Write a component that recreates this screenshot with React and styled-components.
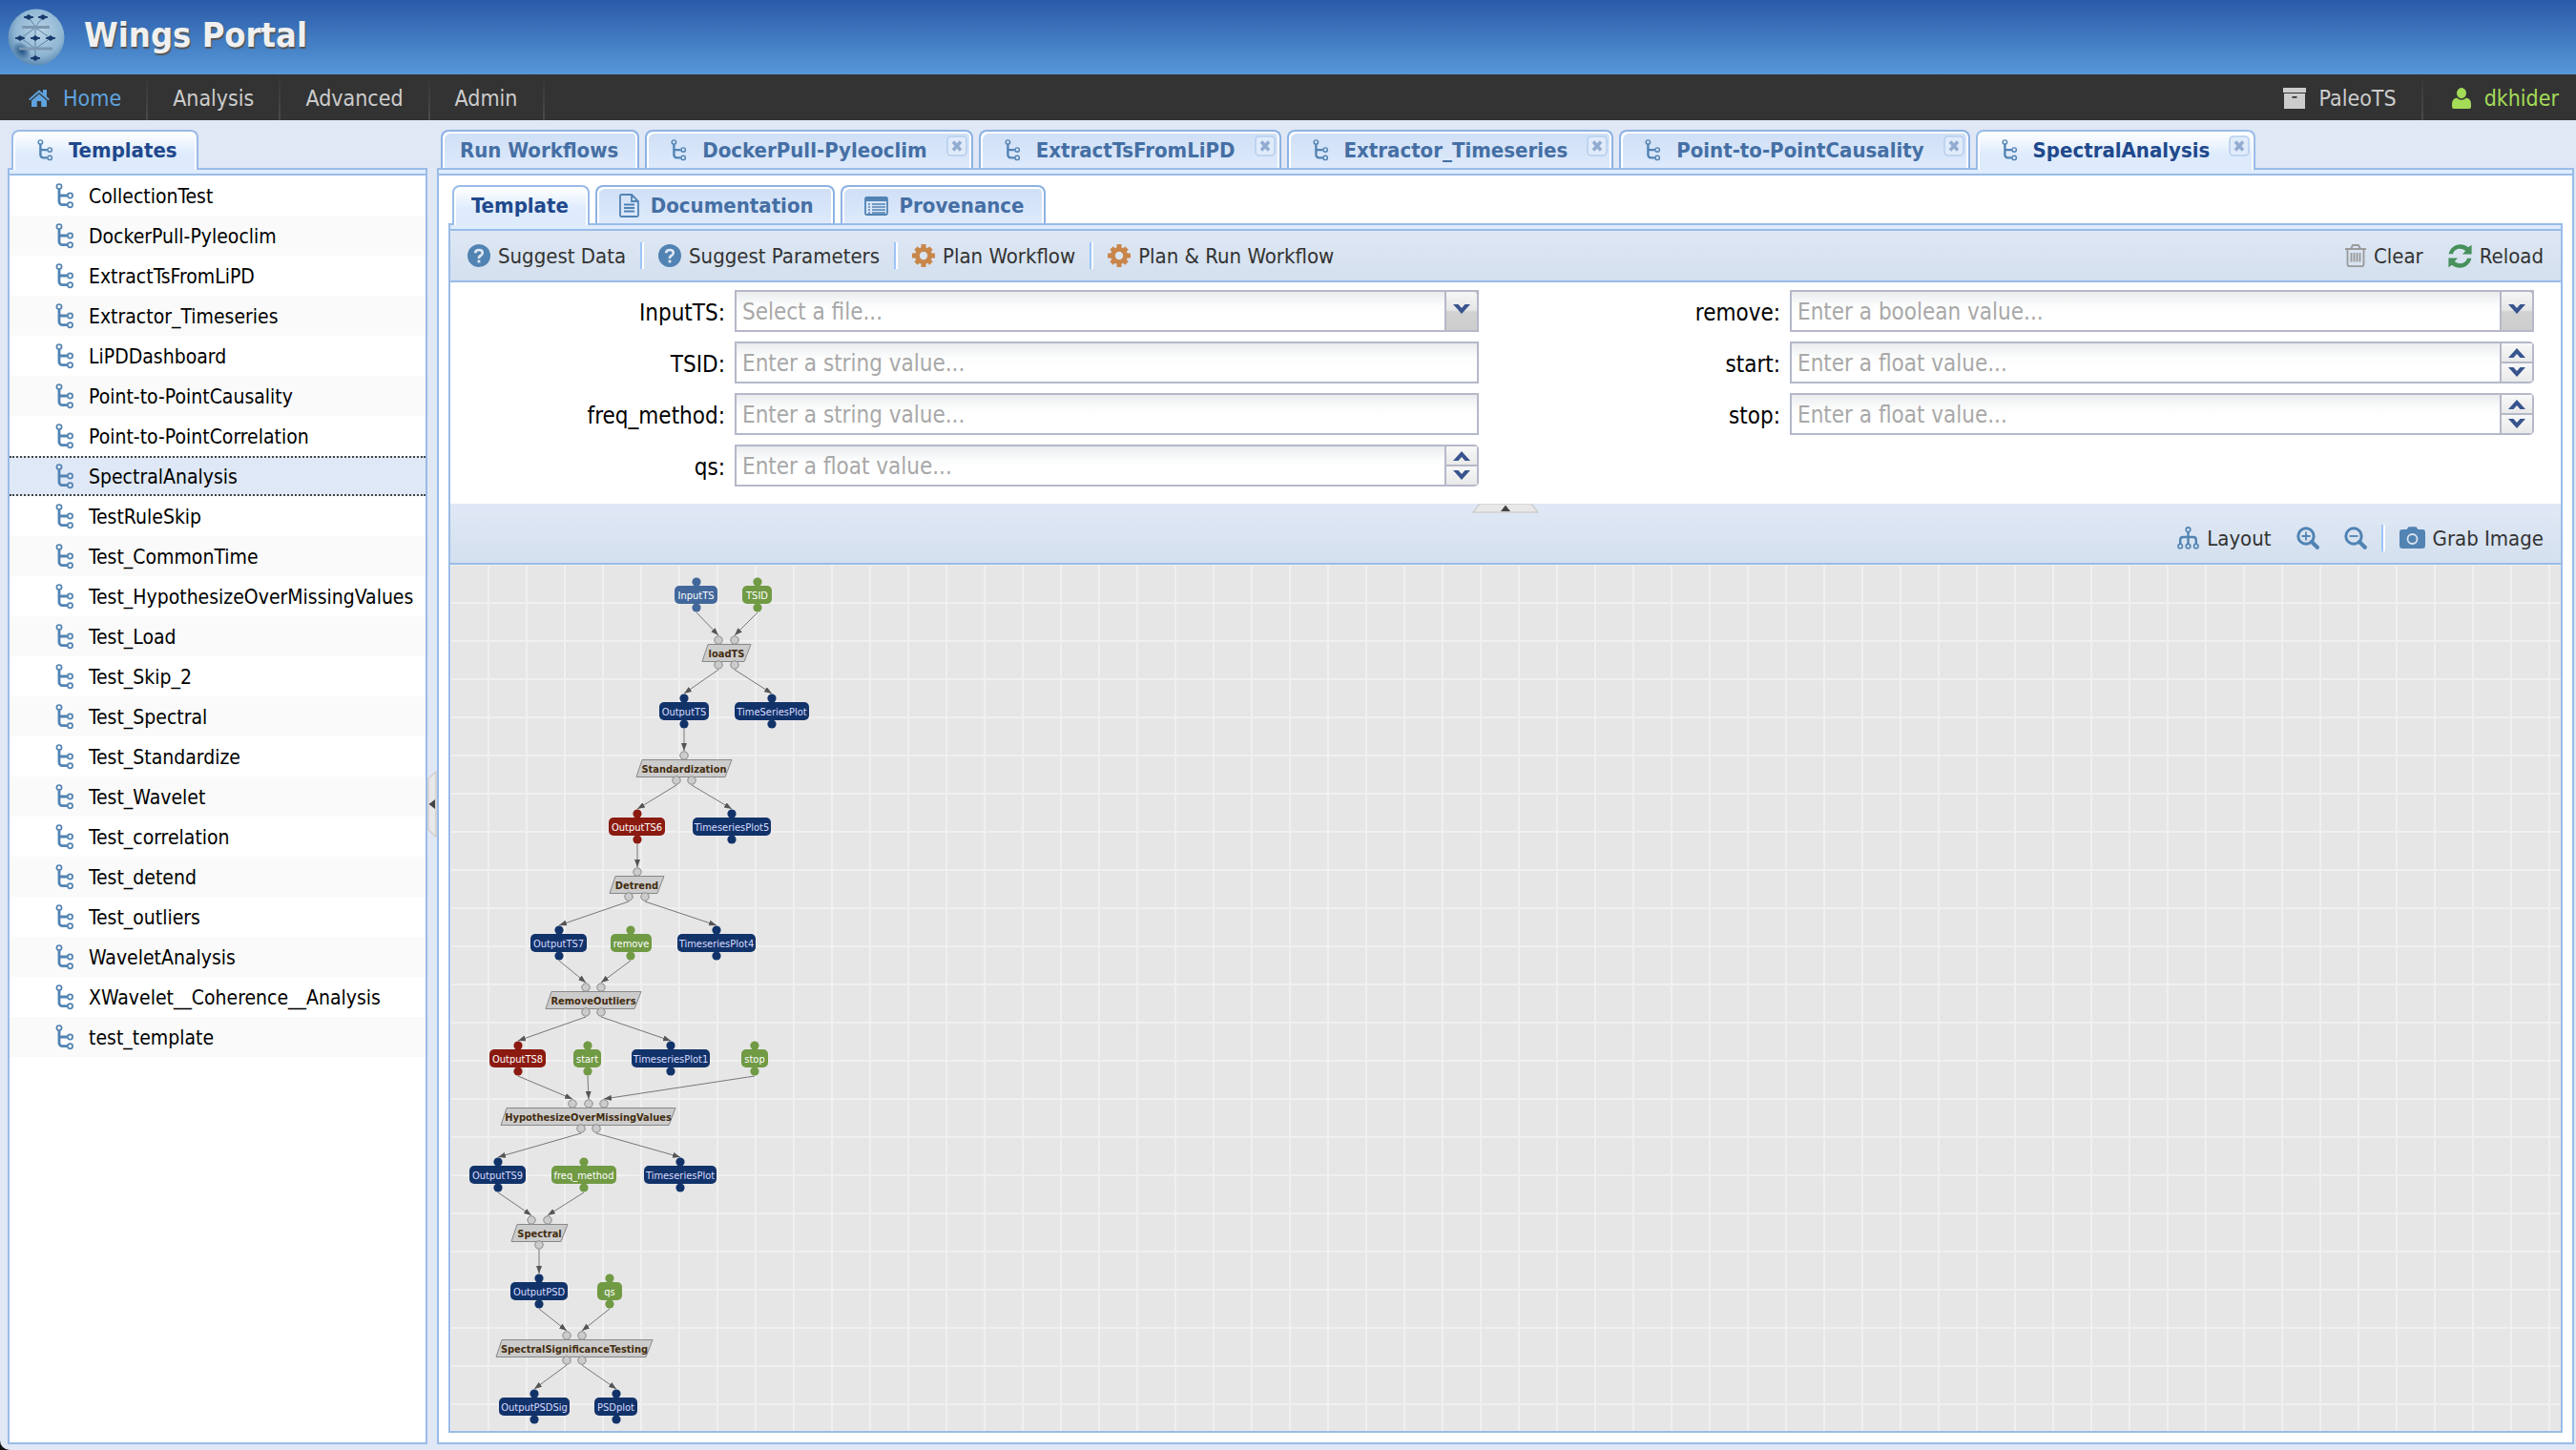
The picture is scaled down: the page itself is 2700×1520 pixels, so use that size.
import React from "react";
import styled, { createGlobalStyle, css } from "styled-components";

const FONT = '"DejaVu Sans Condensed", "DejaVu Sans", "Noto Sans", sans-serif';
const BLUE = "#5183b3";
const LINE = "#99bce8";

const GlobalStyle = createGlobalStyle`
  *, *::before, *::after { box-sizing: border-box; }
  html, body { margin: 0; background: #111; }
  body, button, input, select { font-family: ${FONT}; }
  button { border: 0; padding: 0; margin: 0; background: none; color: inherit; font-size: inherit; font-weight: inherit; cursor: pointer; }
  ul { list-style: none; margin: 0; padding: 0; }
  a { color: inherit; text-decoration: none; }
  svg { display: block; flex: none; }
`;

/* ---------- shell ---------- */
const Shell = styled.div`
  height: 100vh;
  display: flex;
  flex-direction: column;
  background: #e0e7f5;
  border-bottom-left-radius: 10px;
  overflow: hidden;
`;
const Header = styled.header`
  display: flex;
  align-items: center;
  gap: 20px;
  height: 78px;
  padding: 0 8px;
  background: linear-gradient(#2a5aa8, #5698d8);
`;
const Brand = styled.h1`
  margin: 0;
  padding-bottom: 4px;
  font-size: 36px;
  line-height: 44px;
  color: #f0f0f0;
  text-shadow: 1px 2px 1px #555;
`;
const Nav = styled.nav`
  display: flex;
  justify-content: space-between;
  height: 48px;
  background: #333;
`;
const NavGroup = styled.div`
  display: flex;
`;
const NavLink = styled.a`
  display: flex;
  align-items: center;
  gap: 14px;
  padding-top: 2px;
  padding-left: ${(p) => (p.$wide ? 30 : 26)}px;
  padding-right: ${(p) => (p.$last ? 18 : 26)}px;
  font-size: 23px;
  color: ${(p) => p.$color || "#ccc"};
  border-right: ${(p) => (p.$last ? 0 : 2)}px solid;
  border-image: linear-gradient(#333, #4c4c4c) 1;
`;
const Workspace = styled.div`
  flex: 1;
  min-height: 0;
  display: flex;
  padding: 10px 2px 6px 8px;
`;

/* ---------- tabs ---------- */
const TabbedPanel = styled.section`
  display: flex;
  flex-direction: column;
  min-width: 0;
  min-height: 0;
  ${(p) => (p.$width ? css`width: ${p.$width}px; flex: none;` : css`flex: 1;`)}
`;
const TabBar = styled.div`
  display: flex;
  gap: 6px;
  height: 40px;
  padding-left: 4px;
`;
const TabBox = styled.div`
  position: relative;
  display: flex;
  height: ${(p) => (p.$active ? 42 : 40)}px;
  border: 2px solid ${(p) => (p.$active ? LINE : "#8db2e3")};
  border-bottom: 0;
  border-radius: 8px 8px 0 0;
  box-shadow: inset 2px 2px 0 #fff, inset -2px 0 0 #fff;
  color: ${(p) => (p.$active ? "#20488c" : "#456fa4")};
  background: ${(p) => (p.$active ? "linear-gradient(#fff, #deebfd 60%)" : "linear-gradient(#cfdff5, #deeafc)")};
`;
const TabButton = styled.button`
  display: flex;
  align-items: center;
  gap: ${(p) => (p.$compact ? 12 : 16)}px;
  height: 38px;
  padding-top: 1px;
  padding-left: ${(p) => (p.$icon ? (p.$compact ? 23 : 25) : 18)}px;
  padding-right: 20px;
  font-size: 22px;
  font-weight: bold;
  white-space: nowrap;
`;
const CloseButton = styled.button`
  width: 22px;
  height: 22px;
  margin: 4px 4px 0 0;
`;
const PanelBand = styled.div`
  height: 8px;
  background: #deecfd;
  border: 2px solid ${LINE};
`;
const PanelBody = styled.div`
  flex: 1;
  min-height: 0;
  display: flex;
  flex-direction: column;
  padding: ${(p) => (p.$pad ? 10 : 0)}px;
  background: #fff;
  border: 2px solid ${LINE};
  border-top: 0;
`;

/* ---------- templates list ---------- */
const Row = styled.li`
  height: 42px;
  background: ${(p) => (p.$odd ? "#fafafa" : "#fff")};
  ${(p) =>
    p.$selected &&
    css`
      background: #dfe8f6;
      border: 2px dotted #444;
      border-width: 2px 0;
    `}
`;
const RowButton = styled.button`
  display: flex;
  align-items: center;
  gap: 15px;
  width: 100%;
  height: 100%;
  padding-top: 1px;
  padding-left: 48px;
  font-size: 21px;
  color: #000;
  white-space: nowrap;
`;

/* ---------- splitters ---------- */
const Splitter = styled.div`
  flex: none;
  display: flex;
  align-items: center;
  justify-content: center;
  ${(p) => (p.$vertical ? css`width: 10px; padding-top: 36px;` : css`height: 10px; background: #e0e7f5;`)}
`;

/* ---------- toolbars ---------- */
const Toolbar = styled.div`
  flex: none;
  display: flex;
  align-items: center;
  height: 54px;
  padding: 0 18px;
  border-bottom: 2px solid ${LINE};
  background: linear-gradient(#dfe7f4, #d3e0ee);
`;
const Tool = styled.button`
  display: flex;
  align-items: center;
  gap: 8px;
  font-size: 22px;
  color: #333;
  white-space: nowrap;
  & + & { margin-left: 26px; }
`;
const Divider = styled.span`
  width: 4px;
  height: 28px;
  margin: 0 15px;
  border-left: 2px solid #9cc5fb;
  border-right: 2px solid #fff;
`;
const Spacer = styled.span`
  flex: 1;
`;

/* ---------- form ---------- */
const Form = styled.form`
  flex: none;
  display: grid;
  grid-template-columns: 1fr 1fr;
  padding: 8px 0 18px;
`;
const FormColumn = styled.div`
  display: flex;
  flex-direction: column;
  gap: 10px;
`;
const Field = styled.div`
  display: flex;
  gap: 10px;
  padding-right: 28px;
`;
const Label = styled.label`
  width: 288px;
  padding-top: 2px;
  text-align: right;
  font-size: 24px;
  line-height: 44px;
  height: 44px;
  color: #000;
`;
const Control = styled.div`
  position: relative;
  flex: 1;
  display: flex;
  height: 44px;
`;
const inputStyle = css`
  flex: 1;
  min-width: 0;
  height: 44px;
  margin: 0;
  padding: 2px 6px 0;
  font-size: 24px;
  color: #a8a8a8;
  border: 2px solid #b5b8c8;
  border-radius: 0;
  background: linear-gradient(#e9ecee, #fbfcfc 14px, #fff 22px);
  outline: none;
  appearance: none;
`;
const TextInput = styled.input`
  ${inputStyle}
  &::placeholder { color: #a8a8a8; opacity: 1; }
`;
const Select = styled.select`
  ${inputStyle}
`;
const SelectTrigger = styled.span`
  position: absolute;
  right: 0;
  top: 0;
  width: 36px;
  height: 44px;
  display: flex;
  align-items: center;
  justify-content: center;
  padding-bottom: 4px;
  pointer-events: none;
  border: 2px solid #b5b8c8;
  border-top-right-radius: 5px;
  background: linear-gradient(#f6f6f6, #e6e6e6 48%, #d2d2d2 52%, #cdcdcd);
`;
const Spinner = styled.span`
  display: flex;
  flex-direction: column;
  width: 36px;
  margin-left: -2px;
  border: 2px solid #b5b8c8;
  border-radius: 0 5px 5px 0;
  background: #b5b8c8;
  gap: 2px;
`;
const SpinButton = styled.button`
  flex: 1;
  display: flex;
  align-items: center;
  justify-content: center;
  background: linear-gradient(#f8f8f8, #e9e9e9);
`;

/* ---------- canvas ---------- */
const Canvas = styled.div`
  flex: 1;
  min-height: 0;
  overflow: hidden;
  background-color: #e6e6e6;
  background-image:
    linear-gradient(90deg, #f0f0f0 1px, transparent 1px, transparent 39px, #f0f0f0 39px),
    linear-gradient(#f0f0f0 1px, transparent 1px, transparent 39px, #f0f0f0 39px);
  background-size: 40px 40px;
`;

/* ---------- icons ---------- */
const TreeIcon = ({ w = 20, h = 27 }) => (
  <svg width={w} height={h} viewBox="0 0 20 27" fill="none" stroke={BLUE}>
    <path d="M4 6.5V19a3.5 3.5 0 0 0 3.5 3.7H12.5M5 13H12.5" strokeWidth="2.8" />
    <g strokeWidth="1.7">
      <circle cx="4" cy="3.6" r="2.6" />
      <circle cx="15.5" cy="13" r="2.6" />
      <circle cx="15.5" cy="22.8" r="2.6" />
    </g>
  </svg>
);
const HomeIcon = () => (
  <svg width="22" height="20" viewBox="0 0 22 20" fill="#5fa3df">
    <path d="M11 1.2 0 11l1.4 1.3L11 4l9.600 8.300L22 11l-3-2.700V1h-4v3.700z" />
    <path d="M11 5.500 3 12.500V19h5.800v-6h4.400v6H19v-6.500z" />
  </svg>
);
const ArchiveIcon = () => (
  <svg width="24" height="22" viewBox="0 0 24 22" fill="#ccc">
    <path d="M0 0h24v5H0z" />
    <path d="M1 6h22v16H1zM9.500 9v1.800h5V9z" fillRule="evenodd" />
  </svg>
);
const UserIcon = () => (
  <svg width="20" height="22" viewBox="0 0 20 22" fill="#a4db57">
    <ellipse cx="10" cy="5.600" rx="5" ry="5.600" />
    <path d="M5 10.500Q10 15 15 10.500 20 11.500 20 17v3q0 2-2 2H2q-2 0-2-2v-3q0-5.500 5-6.500z" />
  </svg>
);
const DocIcon = () => (
  <svg width="21" height="25" viewBox="0 0 21 25" fill="none" stroke={BLUE} strokeWidth="1.800">
    <path d="M1 2.500Q1 1 2.500 1H13l7 7v14.500q0 1.500-1.500 1.500h-16Q1 24 1 22.500zM13 1v7h7M5 11.500h11M5 15h11M5 18.500h11" />
  </svg>
);
const ListIcon = () => (
  <svg width="25" height="20" viewBox="0 0 25 20" fill="none" stroke={BLUE}>
    <rect x="1" y="1" width="23" height="18" rx="1.500" strokeWidth="1.800" />
    <path d="M1 3h23" strokeWidth="4" />
    <path d="M8 8h14M8 11h14M8 14h14M8 17h14" strokeWidth="1.600" />
    <path d="M4 8h2M4 11h2M4 14h2M4 17h2" strokeWidth="1.600" />
  </svg>
);
const HelpIcon = () => (
  <svg width="24" height="24" viewBox="0 0 24 24">
    <circle cx="12" cy="12" r="12" fill={BLUE} />
    <path d="M8.200 9.300Q8.200 6 12 6t3.800 3.100Q15.800 11 13.800 12T12 15" fill="none" stroke="#dfe8f4" strokeWidth="2.600" />
    <rect x="10.600" y="16.600" width="2.800" height="2.800" fill="#dfe8f4" />
  </svg>
);
const GearIcon = () => (
  <svg width="24" height="24" viewBox="0 0 24 24">
    <g stroke="#c8864a" strokeWidth="5">
      <path d="M12 0v24M0 12h24M4 4l16 16M20 4 4 20" />
    </g>
    <circle cx="12" cy="12" r="9" fill="#c8864a" />
    <circle cx="12" cy="12" r="4.200" fill="#dbe5f1" />
  </svg>
);
const TrashIcon = () => (
  <svg width="22" height="24" viewBox="0 0 22 24" fill="none" stroke="#9a9a9a" strokeWidth="1.800">
    <path d="M0 5h22M6 5 8 1h6l2 4M2.500 5v16q0 2.200 2 2.200h13q2 0 2-2.200V5M6.500 9v9.500M9.500 9v9.500M12.500 9v9.500M15.500 9v9.500" />
  </svg>
);
const ReloadIcon = () => (
  <svg width="25" height="25" viewBox="0 0 25 25" fill="#46915c">
    <path d="M.6 10.200C2 4 7 .3 12.700.3c3.300 0 6 1 8.300 3L24.600.800V10.500H15l3.200-3.400C15.500 4.800 12 4.400 9.500 5.300 7 6.200 5.600 8 5 10.200z" />
    <path d="M24.400 14.800C23 21 18 24.700 12.300 24.700c-3.300 0-6-1-8.300-3L.4 24.200V14.500H10l-3.200 3.400c2.700 2.300 6.200 2.700 8.700 1.800 2.500-.9 3.900-2.700 4.500-4.900z" />
  </svg>
);
const LayoutIcon = () => (
  <svg width="23" height="24" viewBox="0 0 23 24" fill="none" stroke={BLUE}>
    <path d="M11.500 6v12.500M3.200 18.500V14q0-3 3-3h10.600q3 0 3 3v4.500" strokeWidth="2.400" />
    <g strokeWidth="1.600">
      <circle cx="11.500" cy="3.200" r="2.300" />
      <circle cx="3.200" cy="20.500" r="2.300" />
      <circle cx="11.500" cy="20.500" r="2.300" />
      <circle cx="19.800" cy="20.500" r="2.300" />
    </g>
  </svg>
);
const ZoomIcon = ({ plus }) => (
  <svg width="24" height="24" viewBox="0 0 24 24" fill="none" stroke={BLUE}>
    <circle cx="10" cy="10" r="8.200" strokeWidth="3" />
    <path d="M16 16l5.800 5.800" strokeWidth="4.200" strokeLinecap="round" />
    <path d={plus ? "M5.500 10h9M10 5.500v9" : "M5.500 10h9"} strokeWidth="1.800" />
  </svg>
);
const CameraIcon = () => (
  <svg width="27" height="24" viewBox="0 0 27 24">
    <path d="M3 3h4.500L9.500.3h8L19.500 3H24q3 0 3 3v14q0 3-3 3H3q-3 0-3-3V6q0-3 3-3z" fill={BLUE} />
    <circle cx="13.500" cy="13" r="5" fill="none" stroke="#dbe5f1" strokeWidth="1.800" />
  </svg>
);
const CloseIcon = () => (
  <svg width="22" height="22" viewBox="0 0 22 22">
    <rect x="1" y="1" width="20" height="20" rx="4" fill="#e0ebfa" stroke="#b7cfee" strokeWidth="1.600" />
    <path d="M7 6.500l8 9M15 6.500l-8 9" stroke="#92abd0" strokeWidth="3.400" />
  </svg>
);
const Chevron = ({ up }) => (
  <svg width="18" height="11" viewBox="0 0 18 11" fill="#38548e">
    <path d={up ? "M0 11 9 1l9 10h-5.500L9 7l-3.500 4z" : "M0 0 9 10 18 0h-5.500L9 4 5.500 0z"} />
  </svg>
);
const HandleUp = () => (
  <svg width="70" height="10" viewBox="0 0 70 10">
    <path d="M1 9 8 0h54l7 9z" fill="#e8e8e8" stroke="#cfcfcf" strokeWidth="1.500" />
    <path d="M30 8 35 1.500 40 8z" fill="#444" />
  </svg>
);
const HandleLeft = () => (
  <svg width="10" height="70" viewBox="0 0 10 70">
    <path d="M9 1 1 8v54l8 7z" fill="#e8e8e8" stroke="#cfcfcf" strokeWidth="1.500" />
    <path d="M8 30 1.500 35 8 40z" fill="#444" />
  </svg>
);
const Logo = () => (
  <svg width="60" height="60" viewBox="0 0 60 60">
    <defs>
      <radialGradient id="globe" cx="0.55" cy="0.4" r="0.6">
        <stop offset="0" stopColor="#b9d3e6" />
        <stop offset="0.7" stopColor="#8fb6d3" />
        <stop offset="1" stopColor="#5f8cb4" />
      </radialGradient>
      <radialGradient id="shade">
        <stop offset="0" stopColor="#1c4c80" />
        <stop offset="1" stopColor="#1c4c80" stopOpacity="0" />
      </radialGradient>
    </defs>
    <circle cx="30" cy="30" r="29.500" fill="url(#globe)" />
    <ellipse cx="15" cy="44" rx="8" ry="11" transform="rotate(-45 15 44)" fill="url(#shade)" />
    <path d="M22 9 29 19 37 9M29 20 14 31M29 20 45 31M29 20v22M14 31 29 42 45 31M29 42v10" fill="none" stroke="#5d83a6" />
    <path d="M15 19.500h29M12 42h35" stroke="#7c98b0" strokeWidth="3" />
    <g fill="#17386b">
      {[[22, 9], [37, 9], [13, 31], [29, 31], [45, 31], [29, 52]].map(([x, y]) => (
        <path key={`${x}-${y}`} d={`M${x - 5} ${y}l3-1 2-1.500 2 1.500 3 1-3 1-2 1.500-2-1.500z`} stroke="#17386b" />
      ))}
    </g>
  </svg>
);

/* ---------- workflow graph ---------- */
const FILL = { data: "#12336a", input: "#42689b", param: "#719a44", bound: "#8b1a10" };

// Data nodes: label, kind, left, width, top, centre of the ports
const DATA_NODES = [
  ["InputTS", "input", 235, 45, 22, 258],
  ["TSID", "param", 306, 31, 22, 322],
  ["OutputTS", "data", 219, 52, 144, 245],
  ["TimeSeriesPlot", "data", 298, 78, 144, 337],
  ["OutputTS6", "bound", 166, 59, 265, 196],
  ["TimeseriesPlot5", "data", 254, 82, 265, 295],
  ["OutputTS7", "data", 84, 59, 387, 114],
  ["remove", "param", 168, 43, 387, 189],
  ["TimeseriesPlot4", "data", 238, 82, 387, 279],
  ["OutputTS8", "bound", 41, 59, 508, 71],
  ["start", "param", 129, 29, 508, 144],
  ["TimeseriesPlot1", "data", 190, 82, 508, 231],
  ["stop", "param", 305, 28, 508, 319],
  ["OutputTS9", "data", 20, 59, 630, 50],
  ["freq_method", "param", 106, 68, 630, 140],
  ["TimeseriesPlot", "data", 203, 76, 630, 241],
  ["OutputPSD", "data", 63, 60, 752, 93],
  ["qs", "param", 154, 26, 752, 167],
  ["OutputPSDSig", "data", 51, 74, 873, 88],
  ["PSDplot", "data", 151, 45, 873, 174],
];
// Components: label, left, width, top, input port centres, output port centres
const COMPONENTS = [
  ["loadTS", 264, 51, 83, [281, 298], [281, 298]],
  ["Standardization", 195, 100, 204, [245], [237, 253]],
  ["Detrend", 167, 57, 326, [196], [187, 204]],
  ["RemoveOutliers", 100, 100, 447, [142, 158], [142, 158]],
  ["HypothesizeOverMissingValues", 53, 183, 569, [128, 145, 161], [137, 153]],
  ["Spectral", 64, 59, 691, [85, 102], [93]],
  ["SpectralSignificanceTesting", 48, 164, 812, [122, 138], [122, 138]],
];
const LINKS = [
  [258, 50, 281, 74], [322, 50, 298, 74],
  [281, 110, 245, 135], [298, 110, 337, 135],
  [245, 172, 245, 195],
  [237, 231, 196, 256], [253, 231, 295, 256],
  [196, 293, 196, 317],
  [187, 353, 114, 378], [204, 353, 279, 378],
  [114, 415, 142, 438], [189, 415, 158, 438],
  [142, 474, 71, 499], [158, 474, 231, 499],
  [71, 536, 128, 560], [144, 536, 145, 560], [319, 536, 161, 560],
  [137, 596, 50, 621], [153, 596, 241, 621],
  [50, 658, 85, 682], [140, 658, 102, 682],
  [93, 718, 93, 743],
  [93, 780, 122, 803], [167, 780, 138, 803],
  [122, 839, 88, 864], [138, 839, 174, 864],
];

const GraphLabel = styled.text`
  font-family: ${FONT};
  font-size: 11px;
  font-weight: ${(p) => (p.$bold ? "bold" : "normal")};
  fill: ${(p) => p.$color};
  text-anchor: middle;
`;

const Workflow = () => (
  <svg width="400" height="908" viewBox="0 0 400 908" role="img" aria-label="SpectralAnalysis workflow">
    <defs>
      <marker id="arrow" viewBox="0 0 8 6" refX="8" refY="3" markerWidth="8" markerHeight="6" markerUnits="userSpaceOnUse" orient="auto">
        <path d="M0 0 8 3 0 6z" fill="#555" />
      </marker>
    </defs>
    {LINKS.map(([x1, y1, x2, y2], i) => (
      <line key={i} x1={x1} y1={y1} x2={x2} y2={y2} stroke="#777" markerEnd="url(#arrow)" />
    ))}
    {DATA_NODES.map(([label, kind, x, w, y, c]) => (
      <g key={label} fill={FILL[kind]}>
        <circle cx={c} cy={y - 4} r="4.600" />
        <circle cx={c} cy={y + 23} r="4.600" />
        <rect x={x} y={y} width={w} height="19" rx="5" />
        <GraphLabel x={x + w / 2} y={y + 14} $color={kind === "data" ? "#d9dcff" : "#fff"}>{label}</GraphLabel>
      </g>
    ))}
    {COMPONENTS.map(([label, x, w, y, ins, outs]) => (
      <g key={label} fill="#ccc" stroke="#888">
        <path d={`M${x + 6} ${y}.500H${x + w}L${x + w - 7} ${y + 18}.500H${x}z`} />
        {ins.map((cx) => <circle key={`i${cx}`} cx={cx} cy={y - 4} r="4.200" />)}
        {outs.map((cx) => <circle key={`o${cx}`} cx={cx} cy={y + 22} r="4.200" />)}
        <GraphLabel x={x + w / 2} y={y + 14} $bold $color="#432c0f" stroke="none">{label}</GraphLabel>
      </g>
    ))}
  </svg>
);

/* ---------- composed parts ---------- */
const Tab = ({ label, icon, compact, active, closable }) => (
  <TabBox $active={active}>
    <TabButton role="tab" aria-selected={!!active} $icon={!!icon} $compact={compact}>
      {icon}
      {label}
    </TabButton>
    {closable && (
      <CloseButton aria-label={`Close ${label}`}>
        <CloseIcon />
      </CloseButton>
    )}
  </TabBox>
);

const FormField = ({ name, hint, kind }) => (
  <Field>
    <Label htmlFor={name}>{name}:</Label>
    <Control>
      {kind === "select" ? (
        <>
          <Select id={name} defaultValue="">
            <option value="">{hint}</option>
          </Select>
          <SelectTrigger><Chevron /></SelectTrigger>
        </>
      ) : (
        <TextInput id={name} type="text" placeholder={hint} />
      )}
      {kind === "number" && (
        <Spinner>
          <SpinButton type="button" aria-label={`Increase ${name}`}><Chevron up /></SpinButton>
          <SpinButton type="button" aria-label={`Decrease ${name}`}><Chevron /></SpinButton>
        </Spinner>
      )}
    </Control>
  </Field>
);

const TEMPLATES = [
  "CollectionTest", "DockerPull-Pyleoclim", "ExtractTsFromLiPD", "Extractor_Timeseries",
  "LiPDDashboard", "Point-to-PointCausality", "Point-to-PointCorrelation", "SpectralAnalysis",
  "TestRuleSkip", "Test_CommonTime", "Test_HypothesizeOverMissingValues", "Test_Load",
  "Test_Skip_2", "Test_Spectral", "Test_Standardize", "Test_Wavelet", "Test_correlation",
  "Test_detend", "Test_outliers", "WaveletAnalysis", "XWavelet__Coherence__Analysis", "test_template",
];
const OPEN_TABS = [
  "DockerPull-Pyleoclim", "ExtractTsFromLiPD", "Extractor_Timeseries",
  "Point-to-PointCausality", "SpectralAnalysis",
];
const CURRENT = "SpectralAnalysis";

export default function App() {
  const tabTree = <TreeIcon w={17} h={23} />;
  return (
    <Shell>
      <GlobalStyle />
      <Header>
        <Logo />
        <Brand>Wings Portal</Brand>
      </Header>
      <Nav>
        <NavGroup>
          <NavLink href="#home" $color="#5fa3df" $wide><HomeIcon />Home</NavLink>
          <NavLink href="#analysis">Analysis</NavLink>
          <NavLink href="#advanced">Advanced</NavLink>
          <NavLink href="#admin">Admin</NavLink>
        </NavGroup>
        <NavGroup>
          <NavLink href="#domain"><ArchiveIcon />PaleoTS</NavLink>
          <NavLink href="#user" $color="#a4db57" $wide $last><UserIcon />dkhider</NavLink>
        </NavGroup>
      </Nav>
      <Workspace>
        <TabbedPanel $width={440}>
          <TabBar role="tablist">
            <Tab label="Templates" icon={tabTree} active />
          </TabBar>
          <PanelBand />
          <PanelBody>
            <ul>
              {TEMPLATES.map((name, i) => (
                <Row key={name} $odd={i % 2 === 1} $selected={name === CURRENT}>
                  <RowButton><TreeIcon />{name}</RowButton>
                </Row>
              ))}
            </ul>
          </PanelBody>
        </TabbedPanel>
        <Splitter $vertical><HandleLeft /></Splitter>
        <TabbedPanel>
          <TabBar role="tablist">
            <Tab label="Run Workflows" />
            {OPEN_TABS.map((name) => (
              <Tab key={name} label={name} icon={tabTree} active={name === CURRENT} closable />
            ))}
          </TabBar>
          <PanelBand />
          <PanelBody $pad>
            <TabbedPanel>
              <TabBar role="tablist">
                <Tab label="Template" active />
                <Tab label="Documentation" icon={<DocIcon />} compact />
                <Tab label="Provenance" icon={<ListIcon />} compact />
              </TabBar>
              <PanelBand />
              <PanelBody>
                <Toolbar>
                  <Tool><HelpIcon />Suggest Data</Tool>
                  <Divider />
                  <Tool><HelpIcon />Suggest Parameters</Tool>
                  <Divider />
                  <Tool><GearIcon />Plan Workflow</Tool>
                  <Divider />
                  <Tool><GearIcon />Plan &amp; Run Workflow</Tool>
                  <Spacer />
                  <Tool><TrashIcon />Clear</Tool>
                  <Tool><ReloadIcon />Reload</Tool>
                </Toolbar>
                <Form>
                  <FormColumn>
                    <FormField name="InputTS" hint="Select a file..." kind="select" />
                    <FormField name="TSID" hint="Enter a string value..." />
                    <FormField name="freq_method" hint="Enter a string value..." />
                    <FormField name="qs" hint="Enter a float value..." kind="number" />
                  </FormColumn>
                  <FormColumn>
                    <FormField name="remove" hint="Enter a boolean value..." kind="select" />
                    <FormField name="start" hint="Enter a float value..." kind="number" />
                    <FormField name="stop" hint="Enter a float value..." kind="number" />
                  </FormColumn>
                </Form>
                <Splitter><HandleUp /></Splitter>
                <Toolbar>
                  <Spacer />
                  <Tool><LayoutIcon />Layout</Tool>
                  <Tool aria-label="Zoom in"><ZoomIcon plus /></Tool>
                  <Tool aria-label="Zoom out"><ZoomIcon /></Tool>
                  <Divider />
                  <Tool><CameraIcon />Grab Image</Tool>
                </Toolbar>
                <Canvas><Workflow /></Canvas>
              </PanelBody>
            </TabbedPanel>
          </PanelBody>
        </TabbedPanel>
      </Workspace>
    </Shell>
  );
}
